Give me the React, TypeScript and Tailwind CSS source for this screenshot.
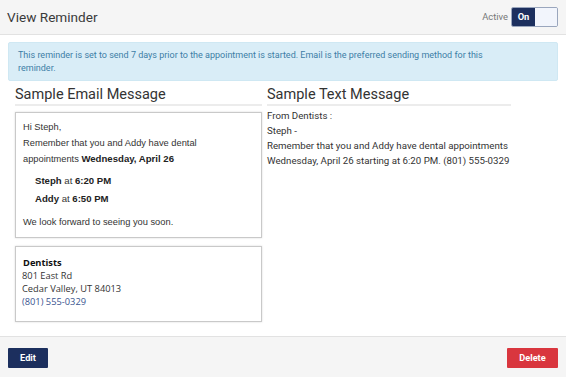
export default function App() {
  return (
    <div className="flex h-[377px] w-[566px] flex-col bg-white font-['Roboto',sans-serif] text-[#333]">
      <div className="flex h-[35px] items-center justify-between border-b border-[#e2e2e2] bg-[#f5f5f5] pl-[7px] pr-[8px]">
        <div className="text-[13.6px] text-[#3a3a3a]">View Reminder</div>
        <div className="flex items-center">
          <span className="mr-[3px] text-[9.4px] text-[#777]">Active</span>
          <div className="flex h-[20px] overflow-hidden rounded-[2px] border border-[#9aa6bd]">
            <div className="flex w-[23px] items-center justify-center bg-[#1c2f5e] text-[9.4px] font-bold text-white">On</div>
            <div className="w-[22px] bg-[#f2f5fc]"></div>
          </div>
        </div>
      </div>

      <div className="bg-white pb-[14px] pt-[7px]">
        <div className="mx-[8px] h-[39px] rounded-[2px] border border-[#cfe8f3] bg-[#d9edf7] px-[9px] pt-[6px] text-[9px] leading-[13px] text-[#3d7ea6]">
          <p className="max-w-[475px]">
            This reminder is set to send 7 days prior to the appointment is started. Email is the preferred sending method for this reminder.
          </p>
        </div>

        <div className="mt-[5px] flex gap-[5px] pl-[15px]">
          <div className="w-[247px]">
            <div className="border-b-2 border-[#ececec] text-[14.5px] leading-[18px] text-[#333]">Sample Email Message</div>
            <div className="mt-[6px] h-[126px] border border-[#c9c9c9] bg-white pl-[7px] pr-[6px] pt-[7px] font-['Liberation_Sans',Arial,sans-serif] text-[9.3px] leading-[15.5px] text-[#333] shadow-[0_0_2px_rgba(0,0,0,0.15)]">
              <div>Hi Steph,</div>
              <div>
                Remember that you and Addy have dental
                <br />
                appointments <b className="text-[9.6px] font-bold text-[#222]">Wednesday, April 26</b>
              </div>
              <div className="mt-[4px] pl-[12px] text-[9.6px] leading-[18px]">
                <div>
                  <b className="text-[#222]">Steph</b> at <b className="text-[#222]">6:20 PM</b>
                </div>
                <div>
                  <b className="text-[#222]">Addy</b> at <b className="text-[#222]">6:50 PM</b>
                </div>
              </div>
              <div className="mt-[7px]">We look forward to seeing you soon.</div>
            </div>
            <div className="mt-[8px] h-[76px] border border-[#c9c9c9] bg-white pl-[6px] pt-[9px] font-['Open_Sans',sans-serif] text-[9.3px] leading-[13px] text-[#333] shadow-[0_0_2px_rgba(0,0,0,0.15)]">
              <div className="pl-[1px] font-bold text-[#111]">Dentists</div>
              <div>801 East Rd</div>
              <div>Cedar Valley, UT 84013</div>
              <div className="text-[#3b5590]">(801) 555-0329</div>
            </div>
          </div>

          <div className="w-[250px]">
            <div className="w-[244px] border-b-2 border-[#ececec] text-[14.5px] leading-[18px] text-[#333]">Sample Text Message</div>
            <div className="mt-[2px] text-[9.7px] leading-[15px] text-[#333]">
              <div>From Dentists :</div>
              <div>Steph -</div>
              <div className="whitespace-nowrap">
                Remember that you and Addy have dental appointments
                <br />
                Wednesday, April 26 starting at 6:20 PM. (801) 555-0329
              </div>
            </div>
          </div>
        </div>
      </div>

      <div className="flex flex-1 items-start justify-between border-t border-[#e2e2e2] bg-[#f5f5f5] px-[8px] pt-[11px]">
        <button className="h-[20px] w-[40px] rounded-[1px] bg-[#1c2f5e] text-[9.2px] font-bold text-white">Edit</button>
        <button className="h-[20px] w-[51px] rounded-[1px] bg-[#d9363e] text-[9.2px] font-bold text-white">Delete</button>
      </div>
    </div>
  );
}
